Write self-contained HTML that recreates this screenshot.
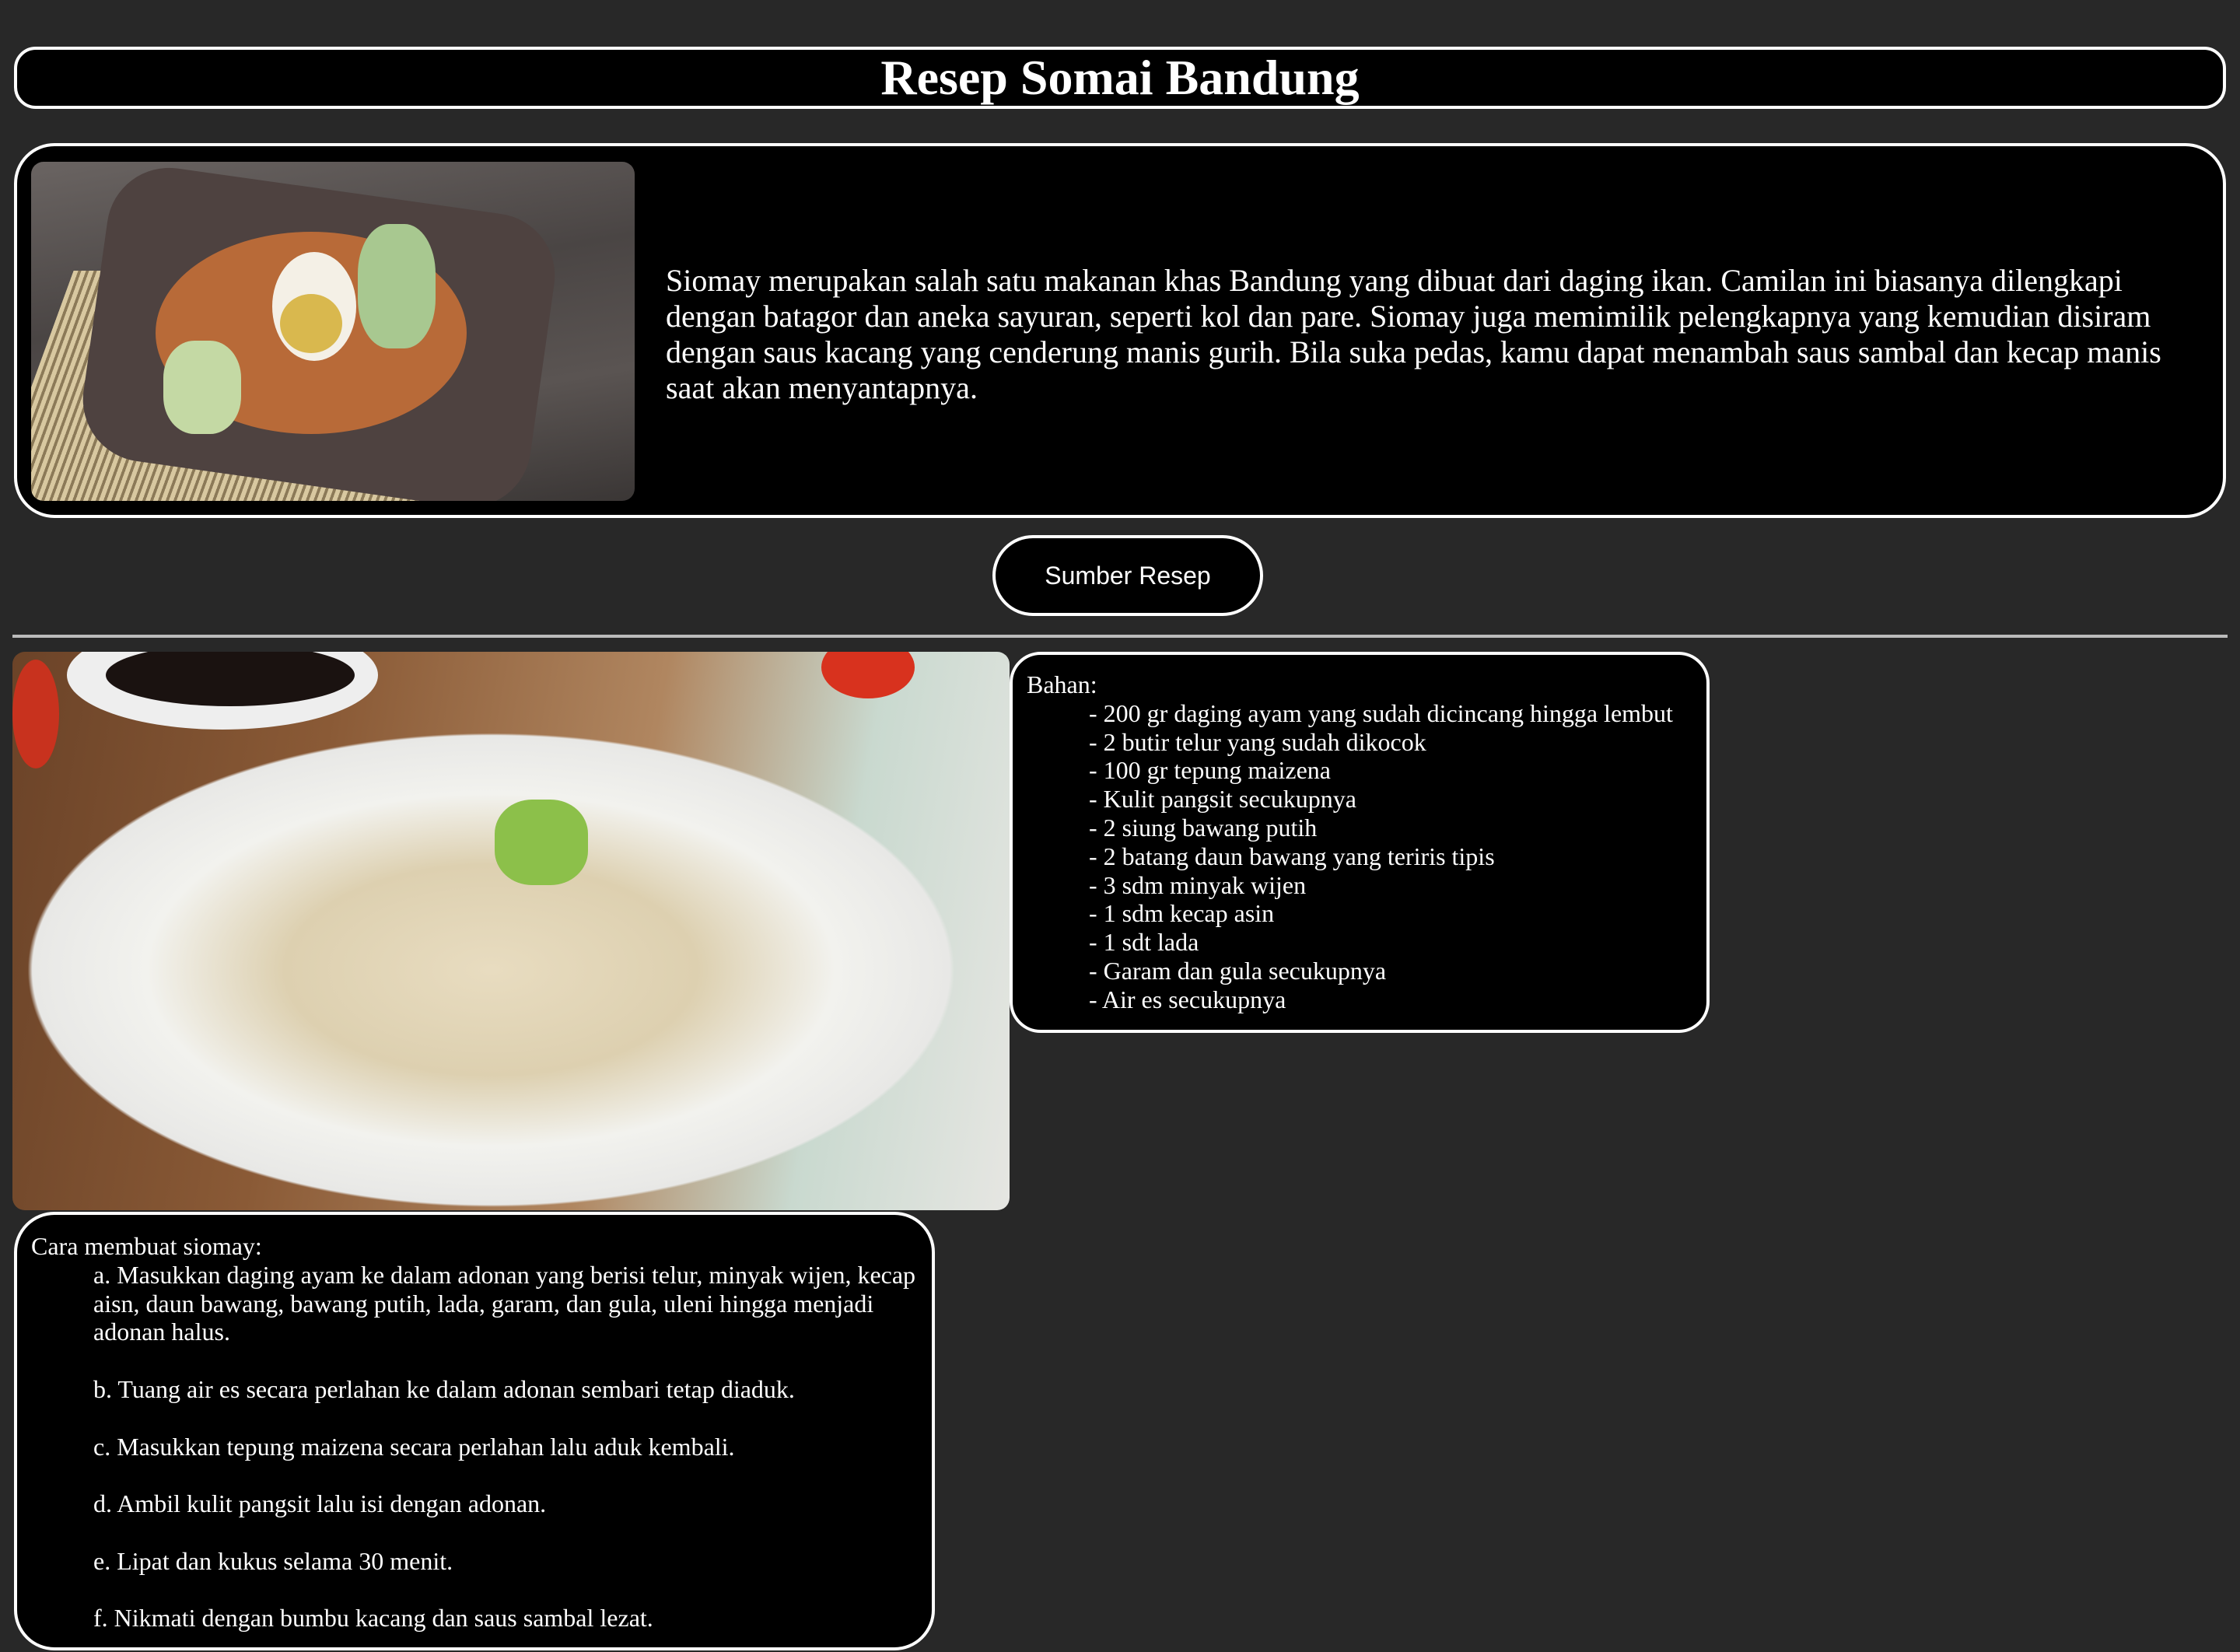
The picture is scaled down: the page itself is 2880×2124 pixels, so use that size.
<!DOCTYPE html>
<html><head><meta charset="utf-8">
<style>
html,body{margin:0;padding:0}
body{width:2880px;height:2124px;background:#282828;overflow:hidden;font-family:"Liberation Serif",serif;color:#fff}
#w{zoom:2;position:relative;width:1440px;height:1062px}
.box{position:absolute;background:#000;border:2px solid #fff;box-sizing:border-box}
#title{left:9px;top:30px;width:1422px;height:40px;border-radius:14px;text-align:center;font-weight:bold;font-size:32px;line-height:36px}
#intro{left:9px;top:92px;width:1422px;height:241px;border-radius:26px}
#img1{position:absolute;left:9px;top:10px;width:388px;height:218px;border-radius:8px;overflow:hidden;
background:linear-gradient(170deg,#6a6462 0%,#4a4544 40%,#5a5452 70%,#3a3635 100%)}
#intro p{position:absolute;left:417px;top:75px;width:980px;margin:0;font-size:20px;line-height:23px}
#btn{position:absolute;left:638px;top:344px;width:174px;height:52px;border:2px solid #fff;box-sizing:border-box;border-radius:26px;background:#000;font-family:"Liberation Sans",sans-serif;font-size:16px;text-align:center;line-height:48px}
#hr{position:absolute;left:8px;top:408px;width:1424px;height:2px;background:#bbb}
#img2{position:absolute;left:8px;top:419px;width:641px;height:359px;border-radius:8px;overflow:hidden;
background:radial-gradient(ellipse 46% 42% at 48% 57%,#e8dcc0 0%,#ddd0b0 45%,#f2f2ee 75%,#e8e8e6 100%,transparent 101%),linear-gradient(100deg,#6b4328 0%,#8a5a36 30%,#b08660 60%,#c9d9cf 80%,#e6e6e2 100%)}
#bahan{left:649px;top:419px;width:450px;height:245px;border-radius:20px;font-size:16px;line-height:18.4px;padding:10px 9px}
#cara{left:9px;top:779px;width:592px;height:282px;border-radius:26px;font-size:16px;line-height:18.4px;padding:11px 0 11px 9px}
.ind{padding-left:40px}
</style></head><body><div id="w">
<div class="box" id="title">Resep Somai Bandung</div>
<div class="box" id="intro">
<div id="img1">
<div style="position:absolute;left:0;top:70px;width:300px;height:150px;background:repeating-linear-gradient(90deg,#d8c8a0 0 3px,#8c7a58 3px 5px);transform:skewX(-20deg)"></div>
<div style="position:absolute;left:40px;top:18px;width:290px;height:190px;border-radius:40px;background:#4e4240;transform:rotate(8deg)"></div>
<div style="position:absolute;left:80px;top:45px;width:200px;height:130px;border-radius:50%;background:#b86a38"></div>
<div style="position:absolute;left:85px;top:115px;width:50px;height:60px;border-radius:40%;background:#c4d9a4"></div>
<div style="position:absolute;left:210px;top:40px;width:50px;height:80px;border-radius:40%;background:#a8c890"></div>
<div style="position:absolute;left:155px;top:58px;width:54px;height:70px;border-radius:50%;background:#f4f0e6"></div>
<div style="position:absolute;left:160px;top:85px;width:40px;height:38px;border-radius:50%;background:#d9b84e"></div>
</div>
<p>Siomay merupakan salah satu makanan khas Bandung yang dibuat dari daging ikan. Camilan ini biasanya dilengkapi dengan batagor dan aneka sayuran, seperti kol dan pare. Siomay juga memimilik pelengkapnya yang kemudian disiram dengan saus kacang yang cenderung manis gurih. Bila suka pedas, kamu dapat menambah saus sambal dan kecap manis saat akan menyantapnya.</p>
</div>
<div id="btn">Sumber Resep</div>
<div id="hr"></div>
<div id="img2">
<div style="position:absolute;left:35px;top:-20px;width:200px;height:70px;border-radius:50%;background:#eee"></div>
<div style="position:absolute;left:60px;top:-5px;width:160px;height:40px;border-radius:50%;background:#1a1210"></div>
<div style="position:absolute;left:520px;top:-10px;width:60px;height:40px;border-radius:50%;background:#d8321e"></div>
<div style="position:absolute;left:0;top:5px;width:30px;height:70px;border-radius:50%;background:#c8321e"></div>
<div style="position:absolute;left:310px;top:95px;width:60px;height:55px;border-radius:40%;background:#8cc04a"></div>
</div>
<div class="box" id="bahan">Bahan:
<div class="ind">- 200 gr daging ayam yang sudah dicincang hingga lembut<br>- 2 butir telur yang sudah dikocok<br>- 100 gr tepung maizena<br>- Kulit pangsit secukupnya<br>- 2 siung bawang putih<br>- 2 batang daun bawang yang teriris tipis<br>- 3 sdm minyak wijen<br>- 1 sdm kecap asin<br>- 1 sdt lada<br>- Garam dan gula secukupnya<br>- Air es secukupnya</div></div>
<div class="box" id="cara">Cara membuat siomay:
<div class="ind">a. Masukkan daging ayam ke dalam adonan yang berisi telur, minyak wijen, kecap aisn, daun bawang, bawang putih, lada, garam, dan gula, uleni hingga menjadi adonan halus.<br><br>b. Tuang air es secara perlahan ke dalam adonan sembari tetap diaduk.<br><br>c. Masukkan tepung maizena secara perlahan lalu aduk kembali.<br><br>d. Ambil kulit pangsit lalu isi dengan adonan.<br><br>e. Lipat dan kukus selama 30 menit.<br><br>f. Nikmati dengan bumbu kacang dan saus sambal lezat.</div></div>
</div></body></html>
